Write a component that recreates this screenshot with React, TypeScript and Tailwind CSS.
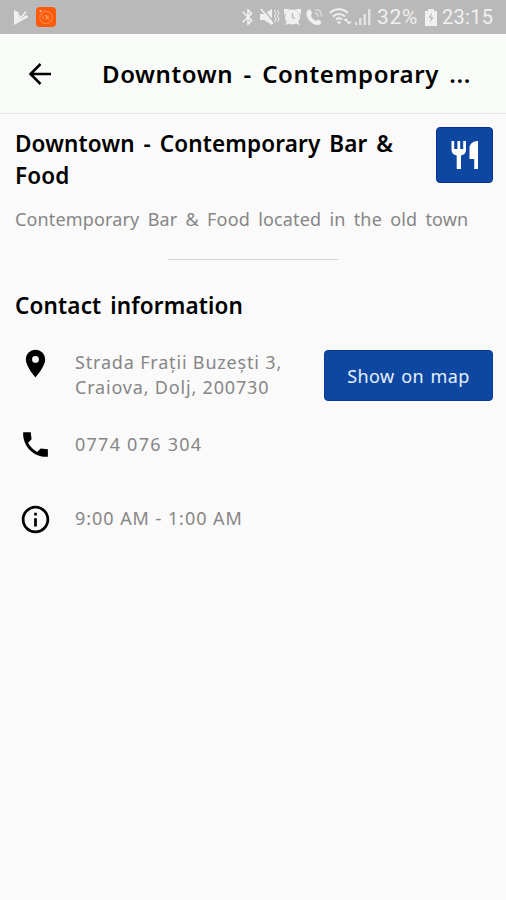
import { MdBluetooth, MdInfoOutline, MdLocationOn } from "react-icons/md";

const display = "font-['Noto_Sans','Open_Sans',sans-serif] font-semibold text-black whitespace-nowrap";
const body = "font-['Noto_Sans','Open_Sans',sans-serif] text-[18px] text-[#868686] whitespace-nowrap";

function StatusBar() {
  return (
    <div className="flex h-[34px] items-center bg-[#b9b9b9] pl-[14px] pr-3 text-[#f0f0f0]">
      <svg width="15" height="16" viewBox="0 0 15 16" fill="currentColor">
        <path d="M0 1 L5 3.5 L4 7 L7 10 L12 6 L14.5 8 L0 16 Z" />
        <path d="M4 6 L7 8.7 L12 2.5" fill="none" stroke="currentColor" strokeWidth="1.6" />
      </svg>
      <svg className="ml-[7px]" width="20" height="20" viewBox="0 0 20 20">
        <rect width="20" height="20" rx="4" fill="#fa5a0a" />
        <circle cx="10" cy="10.5" r="6.2" fill="none" stroke="#ff8545" strokeWidth="1.2" />
        <circle cx="4.5" cy="4" r="1" fill="#ffc09a" />
        <path d="M7 8.5 V12 M9 8.5 H10.5 V12 H9 M12 8.5 V12 H13" fill="none" stroke="#ffa36c" strokeWidth="1" />
      </svg>
      <div className="ml-auto flex items-center">
        <MdBluetooth size={20} />
        <svg className="ml-[2px]" width="20" height="18" viewBox="0 0 20 18" fill="currentColor">
          <path d="M0 6 H4 L12 1 V17 L4 12 H0 Z" />
          <path d="M2 0 L14 14" stroke="#b9b9b9" strokeWidth="1.6" />
          <path d="M1 1 L13 16" stroke="currentColor" strokeWidth="1.6" />
          <path d="M14.5 2 L16 5 L14.5 8 L16 11 L14.5 14 M17.5 2 L19 5 L17.5 8 L19 11 L17.5 14" fill="none" stroke="currentColor" />
        </svg>
        <svg className="ml-1" width="17" height="18" viewBox="0 0 17 18" fill="currentColor">
          <circle cx="8.5" cy="9" r="7.5" />
          <path d="M0 1 H6 L0 7 Z M17 1 H11 L17 7 Z M1 17 L4 12 L7 15 Z M16 17 L13 12 L10 15 Z" />
          <path d="M8.5 5 V9.5 L11 10.5" fill="none" stroke="#b9b9b9" strokeWidth="1.3" />
        </svg>
        <svg className="ml-[5px]" width="18" height="18" viewBox="0 0 18 18" fill="currentColor">
          <path d="M2 2 C3 1 4 1 4.5 2 L6 5 C6.3 6 5.5 6.5 4.8 7.3 C5.5 10 7.5 12 10.3 13 C11 12 11.8 11.3 12.6 11.8 L15 13.5 C16 14.5 14 17 12 17 C6 17 0.5 11 0.5 5.5 C0.5 4 1 3 2 2 Z" />
          <path d="M8.5 5 C10.5 5 12 6.5 12 8.8 M9.5 1.5 C13.5 1.5 15.5 4.5 15.5 8.5" fill="none" stroke="currentColor" strokeWidth="1.5" opacity="0.6" />
        </svg>
        <svg className="ml-[5px]" width="24" height="18" viewBox="0 0 24 18" fill="none" stroke="currentColor" strokeWidth="2">
          <path d="M1 5 C6 0 14 0 19 5 M4 8.5 C7.5 5 12.5 5 16 8.5 M7 11.5 C9 9.7 11 9.7 13 11.5" />
          <path d="M10 16.5 L7.5 13.5 H12.5 Z M17 10 L19.5 13 H14.5 Z M20 16.5 L17 13.5 H23 Z" fill="currentColor" stroke="none" />
        </svg>
        <svg className="ml-px" width="18" height="18" viewBox="0 0 18 18" fill="currentColor">
          <path d="M1 14 H3 V17 H1 Z M5 10 H7.5 V17 H5 Z M9.5 6 H12 V17 H9.5 Z M14 1 H16.5 V17 H14 Z" opacity="0.75" />
        </svg>
        <span className="ml-[5px] w-[43px] whitespace-nowrap font-[Roboto,sans-serif] text-[21px] leading-none tracking-[0.7px]">32%</span>
        <svg className="ml-[5px]" width="12" height="17" viewBox="0 0 12 17" fill="currentColor">
          <path d="M3 0 H9 V2 H12 V17 H0 V2 H3 Z" />
          <path d="M7 3 L3.5 9 H6 L5 14 L8.5 8 H6 Z" fill="#b9b9b9" />
        </svg>
        <span className="ml-[5px] w-[52px] whitespace-nowrap font-[Roboto,sans-serif] text-[20px] leading-none tracking-[0.3px]">23:15</span>
      </div>
    </div>
  );
}

function BackArrow() {
  return (
    <svg className="ml-[28px] shrink-0" width="24" height="24" viewBox="0 0 24 24" fill="none" stroke="black" strokeWidth="2.5">
      <path d="M23 12 H3 M12.5 2 L2.5 12 L12.5 22" />
    </svg>
  );
}

function PhoneIcon() {
  return (
    <svg className="ml-1 shrink-0" width="33" height="33" viewBox="0 0 24 24" fill="black">
      <path d="M21 15.46l-5.27-.61-2.52 2.52c-2.83-1.44-5.15-3.75-6.59-6.59l2.53-2.53L8.54 3H3.03C2.45 13.18 10.82 21.55 21 20.97v-5.51z" />
    </svg>
  );
}

function UtensilsIcon() {
  return (
    <svg width="28" height="28" viewBox="0 0 28 28" fill="white">
      <path d="M0.5 0 H3.2 V8 H6.4 V0 H9.2 V8 H12.2 V0 H15 V9 C15 12 13 14 10 14.5 V28 H5.7 V14.5 C2.5 14 0.5 12 0.5 9 Z" />
      <path d="M27 0 V28 H23.2 V18 H18.5 V6 C19.5 2 23 0 27 0 Z" />
    </svg>
  );
}

export default function App() {
  return (
    <div className="flex h-[900px] w-[506px] flex-col overflow-hidden bg-[#fafafa]">
      <StatusBar />
      <header className="flex h-[80px] items-center border-b border-[#e2e3e2] bg-[#f9fbf8]">
        <BackArrow />
        <h1 className={`${display} ml-[50px] text-[24px] leading-[34px] tracking-[0.6px] [word-spacing:3.5px]`}>
          Downtown - Contemporary ...
        </h1>
      </header>
      <main className="flex flex-col px-[15px]">
        <div className="mt-[13px] flex items-start justify-between">
          <h2 className={`${display} pt-px text-[22.5px] leading-[32px] tracking-[0.15px] [word-spacing:2.8px]`}>
            Downtown - Contemporary Bar &amp;
            <br />
            Food
          </h2>
          <div className="-mr-[2px] flex h-[56px] w-[57px] shrink-0 items-center justify-center rounded-[4px] border border-[#0a2f8f] bg-[#0d47a1]">
            <UtensilsIcon />
          </div>
        </div>
        <p className={`${body} mt-[13px] leading-[28px] tracking-[0.15px] [word-spacing:3.4px]`}>
          Contemporary Bar &amp; Food located in the old town
        </p>
        <hr className="mx-auto mt-[26px] w-[170px] border-[#d4d4d4]" />
        <h2 className={`${display} mt-[30px] text-[22.5px] leading-[32px] tracking-[0.15px] [word-spacing:2.8px]`}>
          Contact information
        </h2>
        <div className="mt-[23px] flex h-[56px] items-start">
          <MdLocationOn className="ml-1 mt-[2px] shrink-0 text-black" size={33} />
          <p className={`${body} ml-[23px] mt-[5px] leading-[25px] tracking-[0.82px]`}>
            Strada Frații Buzești 3,
            <br />
            Craiova, Dolj, 200730
          </p>
          <button className="-mr-[2px] ml-auto mt-[5px] h-[51px] w-[169px] shrink-0 whitespace-nowrap rounded-[4px] border border-[#0a3a98] bg-[#0d47a1] pt-[2px] font-['Noto_Sans',sans-serif] text-[18px] tracking-[0.4px] text-[#e6f0ff] [word-spacing:1.5px]">
            Show on map
          </button>
        </div>
        <div className="mt-[23px] flex h-[40px] items-center">
          <PhoneIcon />
          <p className={`${body} ml-[23px] tracking-[1.25px]`}>0774 076 304</p>
        </div>
        <div className="mt-[35px] flex h-[40px] items-center">
          <MdInfoOutline className="ml-1 shrink-0 text-black" size={33} />
          <p className={`${body} -mt-px ml-[23px] tracking-[0.95px]`}>9:00 AM - 1:00 AM</p>
        </div>
      </main>
    </div>
  );
}
